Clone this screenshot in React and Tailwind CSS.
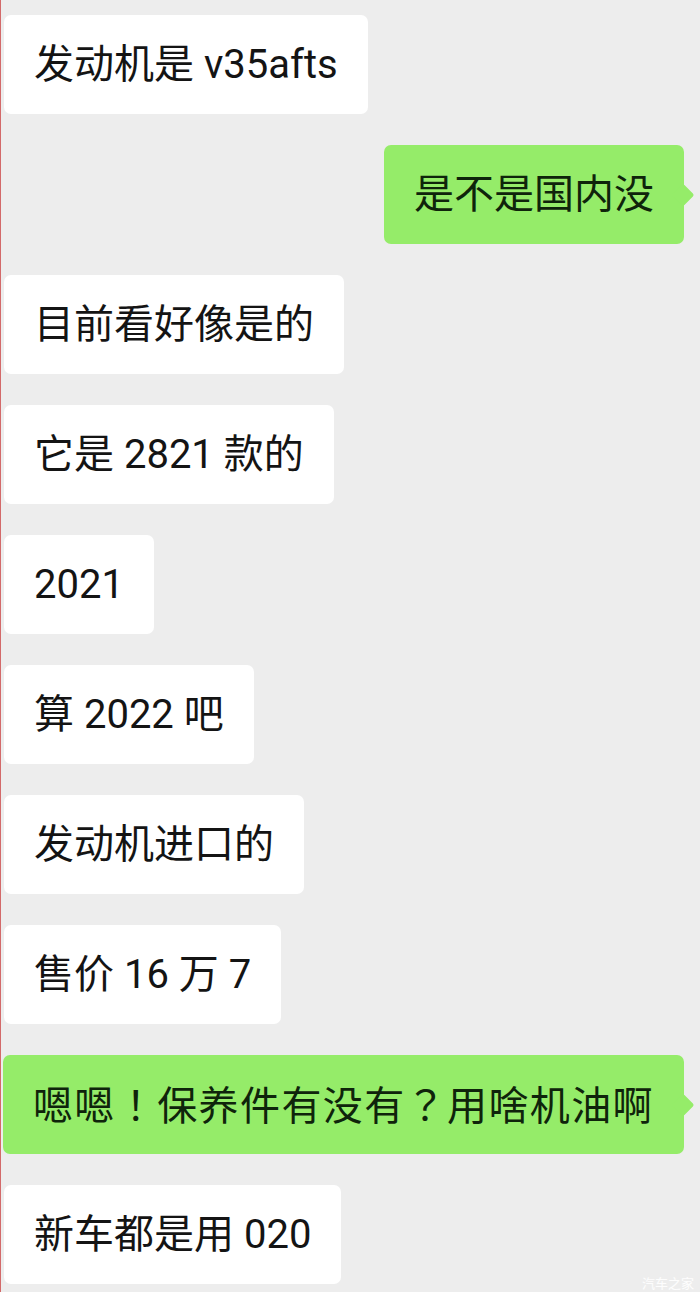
import React from 'react';

const messages = [
  { side: 'left', text: '发动机是 v35afts' },
  { side: 'right', text: '是不是国内没' },
  { side: 'left', text: '目前看好像是的' },
  { side: 'left', text: '它是 2821 款的' },
  { side: 'left', text: '2021' },
  { side: 'left', text: '算 2022 吧' },
  { side: 'left', text: '发动机进口的' },
  { side: 'left', text: '售价 16 万 7' },
  { side: 'right', text: '嗯嗯！保养件有没有？用啥机油啊', wide: true },
  { side: 'left', text: '新车都是用 020' },
];

// full-width punctuation sits centred in its cell in the screenshot
const punct = /([！？])/;

function Text({ text }) {
  return text.split(punct).map((part, i) =>
    punct.test(part) ? (
      <span key={i} style={{ fontFamily: '"Noto Sans CJK TC", sans-serif' }}>{part}</span>
    ) : (
      <React.Fragment key={i}>{part}</React.Fragment>
    )
  );
}

function Bubble({ side, text, wide }) {
  if (side === 'right') {
    return (
      <div className="relative self-end mr-[16px] h-[99px] flex items-center px-[30px] rounded-[7px] bg-[#95ec69] text-[#0f240b]">
        <span className={wide ? 'tracking-[1.4px]' : ''}>
          <Text text={text} />
        </span>
        {/* tail */}
        <div className="absolute right-[-7px] top-[42px] w-[16px] h-[16px] rotate-45 rounded-[2px] bg-[#95ec69]" />
      </div>
    );
  }
  return (
    <div className="self-start ml-[3px] h-[99px] flex items-center px-[30px] rounded-[7px] bg-white text-[#141414]">
      <span>{text}</span>
    </div>
  );
}

export default function App() {
  return (
    <div
      className="relative w-[700px] h-[1292px] overflow-hidden bg-[#ededed] border-l-[1.5px] border-[#d36a6a] text-[40px] leading-none"
      style={{ fontFamily: 'Roboto, "Noto Sans CJK SC", sans-serif' }}
    >
      <div className="flex flex-col gap-[31px] pt-[15px]">
        {messages.map((m, i) => (
          <Bubble key={i} {...m} />
        ))}
      </div>
      {/* watermark */}
      <div className="absolute right-[6px] bottom-[2px] text-[13px] text-white/90">汽车之家</div>
    </div>
  );
}
